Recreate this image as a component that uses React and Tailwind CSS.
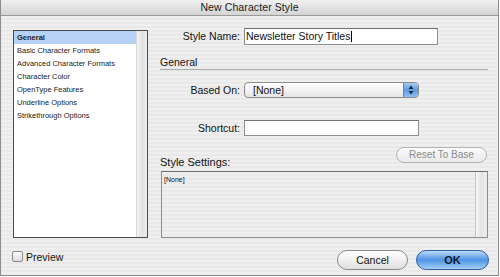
export default function App() {
  const items = [
    'General',
    'Basic Character Formats',
    'Advanced Character Formats',
    'Character Color',
    'OpenType Features',
    'Underline Options',
    'Strikethrough Options',
  ];

  return (
    <div className="w-[500px] h-[277px] bg-white font-['Liberation_Sans',Arial,sans-serif] text-[#111] antialiased">
      <div className="w-[499px] h-[276px] flex flex-col border border-t-0 border-[#8c8c8c] bg-[repeating-linear-gradient(180deg,#efefef_0px,#efefef_2px,#e9e9e9_2px,#e9e9e9_4px)]">
        {/* title bar */}
        <div className="h-[16px] shrink-0 flex items-center justify-center border-b border-[#9a9a9a] bg-gradient-to-b from-[#f0f0f0] to-[#d4d4d4]">
          <span className="text-[10.5px] leading-[13px] text-[#1a1a1a] tracking-[0.1px]">New Character Style</span>
        </div>

        <div className="flex-1 flex flex-col pl-[12px] pr-[9px] pt-[12px]">
          <div className="flex items-start">
            {/* category list */}
            <div className="mt-[2px] w-[135px] h-[208px] border border-[#4a4a4a] bg-white flex">
              <div className="w-[122px] flex flex-col">
                {items.map((t, i) => (
                  <div
                    key={t}
                    className={
                      'h-[13px] pl-[3px] flex items-center text-[7.5px] leading-[13px] text-[#222] ' +
                      (i === 0 ? 'bg-[#b6d2f4] font-bold' : '')
                    }
                  >
                    {t}
                  </div>
                ))}
              </div>
              <div className="flex-1 border-l border-[#d6d6d6] bg-gradient-to-r from-[#f4f4f4] via-[#e2e2e2] to-[#ececec]" />
            </div>

            {/* settings */}
            <div className="ml-[12px] w-[328px] flex flex-col">
              <div className="h-[17px] flex items-center">
                <div className="w-[80px] text-right text-[10.5px] leading-[13px]">Style Name:</div>
                <div className="ml-[4px] w-[194px] h-[17px] bg-white border border-[#8e8e8e] border-t-[#6f6f6f] flex items-center pl-[1px] text-[10.5px] leading-[13px]">
                  Newsletter Story Titles
                  <span className="w-[1px] h-[11px] bg-black ml-[1px]" />
                </div>
              </div>

              <div className="mt-[11px] h-[14px] border-b border-[#a8a8a8] text-[10.5px] leading-[13px]">General</div>

              <div className="mt-[12px] h-[16px] flex items-center">
                <div className="w-[80px] text-right text-[10.5px] leading-[13px]">Based On:</div>
                <div className="ml-[4px] w-[175px] h-[16px] rounded-[4px] border border-[#8a8a8a] bg-gradient-to-b from-[#ffffff] to-[#e6e6e6] flex items-center overflow-hidden">
                  <span className="flex-1 pl-[8px] text-[10.5px] leading-[13px]">[None]</span>
                  <div className="w-[15px] h-full bg-gradient-to-b from-[#a9cdf5] via-[#5b9be3] to-[#8fc0f2] border-l border-[#5a86b8] flex items-center justify-center">
                    <svg width="6" height="10" viewBox="0 0 6 10">
                      <path d="M3 0.5 L5.5 4 L0.5 4 Z" fill="#1b2a3c" />
                      <path d="M3 9.5 L5.5 6 L0.5 6 Z" fill="#1b2a3c" />
                    </svg>
                  </div>
                </div>
              </div>

              <div className="mt-[22px] h-[16px] flex items-center">
                <div className="w-[80px] text-right text-[10.5px] leading-[13px]">Shortcut:</div>
                <div className="ml-[4px] w-[175px] h-[16px] bg-white border border-[#8e8e8e] border-t-[#6f6f6f]" />
              </div>

              <div className="mt-[11px] h-[22px] flex justify-between">
                <div className="self-end text-[11px] leading-[13px]">Style Settings:</div>
                <div className="mr-[1px] w-[91px] h-[16px] rounded-full border border-[#b4b4b4] bg-gradient-to-b from-[#fbfbfb] to-[#e9e9e9] flex items-center justify-center text-[10px] leading-[12px] text-[#8a8a8a]">
                  Reset To Base
                </div>
              </div>

              <div className="mt-[2px] ml-[1px] w-[327px] h-[67px] border border-[#8c8c8c] border-t-[#6e6e6e] flex">
                <div className="flex-1 pl-[2px] pt-[3px] text-[7px] leading-[9px]">[None]</div>
                <div className="w-[11px] mr-[1px] border-l border-[#c4c4c4] bg-gradient-to-r from-[#f7f7f7] via-[#e4e4e4] to-[#eeeeee]" />
              </div>
            </div>
          </div>

          {/* bottom row */}
          <div className="mt-[12px] h-[20px] flex items-start">
            <div className="-ml-[1px] mt-[1px] w-[11px] h-[11px] rounded-[2px] border border-[#8a8a8a] bg-gradient-to-b from-[#fdfdfd] to-[#dcdcdc]" />
            <span className="ml-[3px] mt-[1px] text-[10.5px] leading-[12px]">Preview</span>
            <div className="ml-auto w-[71px] h-[20px] rounded-full border border-[#8a8a8a] bg-gradient-to-b from-[#ffffff] via-[#f0f0f0] to-[#dedede] flex items-center justify-center text-[10.5px] leading-[12px]">
              Cancel
            </div>
            <div className="ml-[8px] w-[73px] h-[20px] rounded-full border border-[#2f5f9e] bg-gradient-to-b from-[#bcdaf8] via-[#4d93e4] to-[#a6d0f7] flex items-center justify-center text-[11px] leading-[12px] font-bold text-[#0d1a2b]">
              OK
            </div>
          </div>
        </div>
      </div>
    </div>
  );
}
